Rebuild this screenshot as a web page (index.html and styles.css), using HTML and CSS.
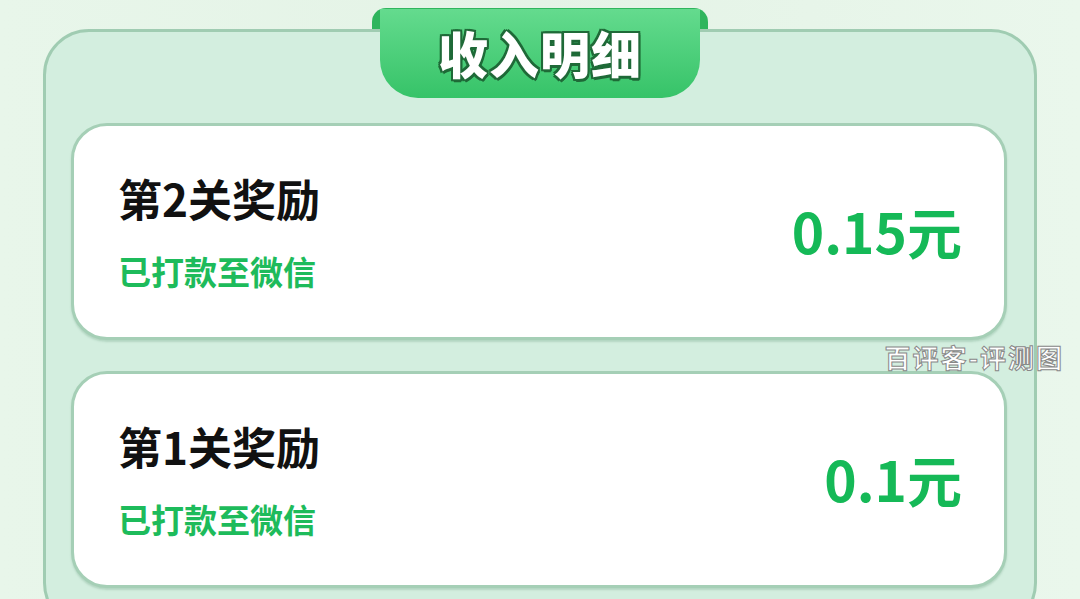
FILE: index.html
```html
<!DOCTYPE html>
<html>
  <head>
    <meta charset="utf-8">
    <title>收入明细</title>
    <link rel="stylesheet" href="styles.css">
  </head>
  <body>
    <div class="panel">
      <div class="tab"><span>收入明细</span></div>
      <div class="card">
        <div class="info">
          <h3>第2关奖励</h3>
          <p>已打款至微信</p>
        </div>
        <div class="money">0.15元</div>
      </div>
      <div class="card">
        <div class="info">
          <h3>第1关奖励</h3>
          <p>已打款至微信</p>
        </div>
        <div class="money">0.1元</div>
      </div>
    </div>
    <div class="mark">百评客-评测图</div>
  </body>
</html>
```

FILE: styles.css
```css
*{ margin:0; padding:0; box-sizing: border-box; }
html,body{ height: 599px; overflow: hidden; }
body{ background: linear-gradient(90deg, #e8f6ea, #e4f3e6 50%, #eaf7ec);
  font-family: "Noto Sans CJK SC", "Noto Sans", sans-serif; position: relative; }

.panel{ position: relative; width: 994px; margin: 29px 0 0 43px; padding: 91px 27px 0 25px;
  border: 3px solid #a0ccb2; border-radius: 46px; background: #d3eedf; height: 600px; }

/* header ribbon */
.tab{ position: absolute; left: 50%; top: -23px; width: 320px; height: 89px; margin-left: -160px;
  border-radius: 0 0 38px 38px; background: linear-gradient(180deg, #64db8e, #36c368);
  display: flex; align-items: center; justify-content: center; }
.tab::before{ content: ''; position: absolute; left: -8px; right: -8px; top: -1px; height: 23px;
  border-radius: 14px 14px 0 0; background: #2fb55d; z-index: -1; }
.tab span{ font-size: 50px; font-weight: 900; color: #fff; letter-spacing: 1px; margin-top: -4px;
  text-shadow: 2px 0 0 #1f6a38, -2px 0 0 #1f6a38, 0 2px 0 #1f6a38, 0 -2px 0 #1f6a38,
    2px 2px 0 #1f6a38, -2px -2px 0 #1f6a38, 2px -2px 0 #1f6a38, -2px 2px 0 #1f6a38, 1px 3px 0 #1f6a38; }

.card{ display: flex; align-items: center; justify-content: space-between; height: 217px;
  margin-bottom: 31px; padding: 0 42px 0 44px; background: #fff;
  border: 3px solid #a5cfb6; border-radius: 36px; box-shadow: 0 2px 2px rgba(120,170,140,.35); }
.info h3{ font-size: 44px; font-weight: 700; line-height: 44px; color: #111; }
.info p{ font-size: 33px; font-weight: 700; line-height: 33px; color: #1dbb5b; margin-top: 35px; }
.money{ font-size: 55px; font-weight: 700; color: #15b957; line-height: 60px; margin-top: -4px; }

.mark{ position: absolute; right: 16px; top: 338px; font-size: 26px; font-weight: 700; color: #fff;
  -webkit-text-stroke: 1px #888; letter-spacing: 2px; }
```
